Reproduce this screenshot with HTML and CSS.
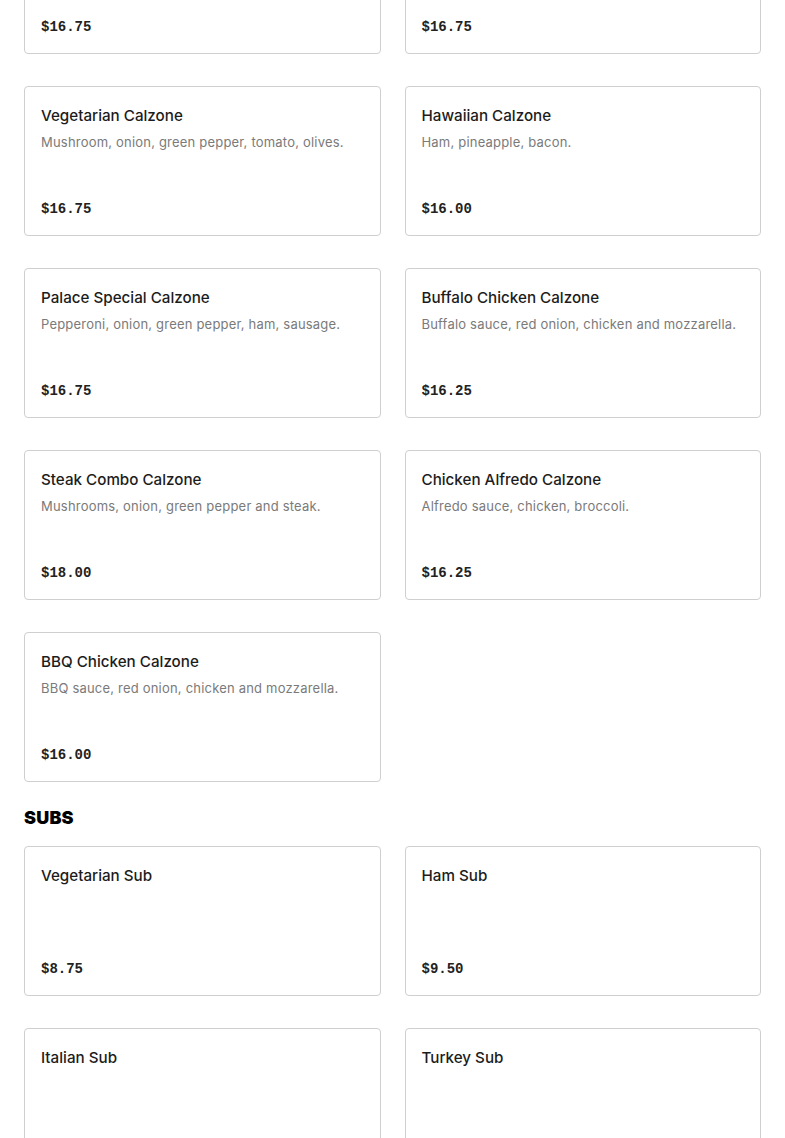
FILE: index.html
```html
<!DOCTYPE html>
<html lang="en">
<head>
<meta charset="utf-8">
<title>Menu</title>
<link rel="stylesheet" href="styles.css">
</head>
<body>
<main class="menu">
  <section class="section section-first">
    <div class="grid">
      <article class="card"><h3 class="card-title">Pepperoni Calzone</h3><p class="card-desc">Pepperoni and mozzarella.</p><span class="card-price">$16.75</span></article>
      <article class="card"><h3 class="card-title">Meat Lovers Calzone</h3><p class="card-desc">Pepperoni, ham, sausage, bacon.</p><span class="card-price">$16.75</span></article>
      <article class="card"><h3 class="card-title">Vegetarian Calzone</h3><p class="card-desc">Mushroom, onion, green pepper, tomato, olives.</p><span class="card-price">$16.75</span></article>
      <article class="card"><h3 class="card-title">Hawaiian Calzone</h3><p class="card-desc">Ham, pineapple, bacon.</p><span class="card-price">$16.00</span></article>
      <article class="card"><h3 class="card-title">Palace Special Calzone</h3><p class="card-desc">Pepperoni, onion, green pepper, ham, sausage.</p><span class="card-price">$16.75</span></article>
      <article class="card"><h3 class="card-title">Buffalo Chicken Calzone</h3><p class="card-desc">Buffalo sauce, red onion, chicken and mozzarella.</p><span class="card-price">$16.25</span></article>
      <article class="card"><h3 class="card-title">Steak Combo Calzone</h3><p class="card-desc">Mushrooms, onion, green pepper and steak.</p><span class="card-price">$18.00</span></article>
      <article class="card"><h3 class="card-title">Chicken Alfredo Calzone</h3><p class="card-desc">Alfredo sauce, chicken, broccoli.</p><span class="card-price">$16.25</span></article>
      <article class="card"><h3 class="card-title">BBQ Chicken Calzone</h3><p class="card-desc">BBQ sauce, red onion, chicken and mozzarella.</p><span class="card-price">$16.00</span></article>
    </div>
  </section>
  <section class="section">
    <h2 class="section-title">SUBS</h2>
    <div class="grid">
      <article class="card"><h3 class="card-title">Vegetarian Sub</h3><span class="card-price">$8.75</span></article>
      <article class="card"><h3 class="card-title">Ham Sub</h3><span class="card-price">$9.50</span></article>
      <article class="card"><h3 class="card-title">Italian Sub</h3><span class="card-price">$9.50</span></article>
      <article class="card"><h3 class="card-title">Turkey Sub</h3><span class="card-price">$9.50</span></article>
    </div>
  </section>
</main>
</body>
</html>
```

FILE: styles.css
```css
* { box-sizing: border-box; }
html, body { margin: 0; padding: 0; background: #fff; }
body { font-family: Inter, "Liberation Sans", sans-serif; color: #1f1f1f; }
.menu { padding: 0 24px; }
.section-first { margin-top: -96px; }
.section + .section { margin-top: 24px; }
.section-title {
  margin: 0 0 16px;
  font-family: Inter, sans-serif;
  font-weight: 900;
  font-size: 18px;
  line-height: 24px;
  letter-spacing: 0.2px;
  color: #000;
}
.grid {
  display: grid;
  grid-template-columns: 1fr 1fr;
  column-gap: 24px;
  row-gap: 32px;
}
.card {
  display: flex;
  flex-direction: column;
  min-height: 150px;
  padding: 17px 16px 16px;
  border: 1px solid #cfcfcf;
  border-radius: 4px;
  background: #fff;
}
.card-title {
  margin: 0;
  font-size: 15.2px;
  line-height: 24px;
  font-weight: 500;
  color: #1c1c1c;
}
.card-desc {
  margin: 4px 0 0;
  font-size: 13px;
  line-height: 20px;
  letter-spacing: 0.2px;
  color: #7a7a7a;
}
.card-price {
  margin-top: auto;
  font-family: "Liberation Mono", monospace;
  font-weight: 700;
  font-size: 14px;
  line-height: 20px;
  color: #222;
}
```
